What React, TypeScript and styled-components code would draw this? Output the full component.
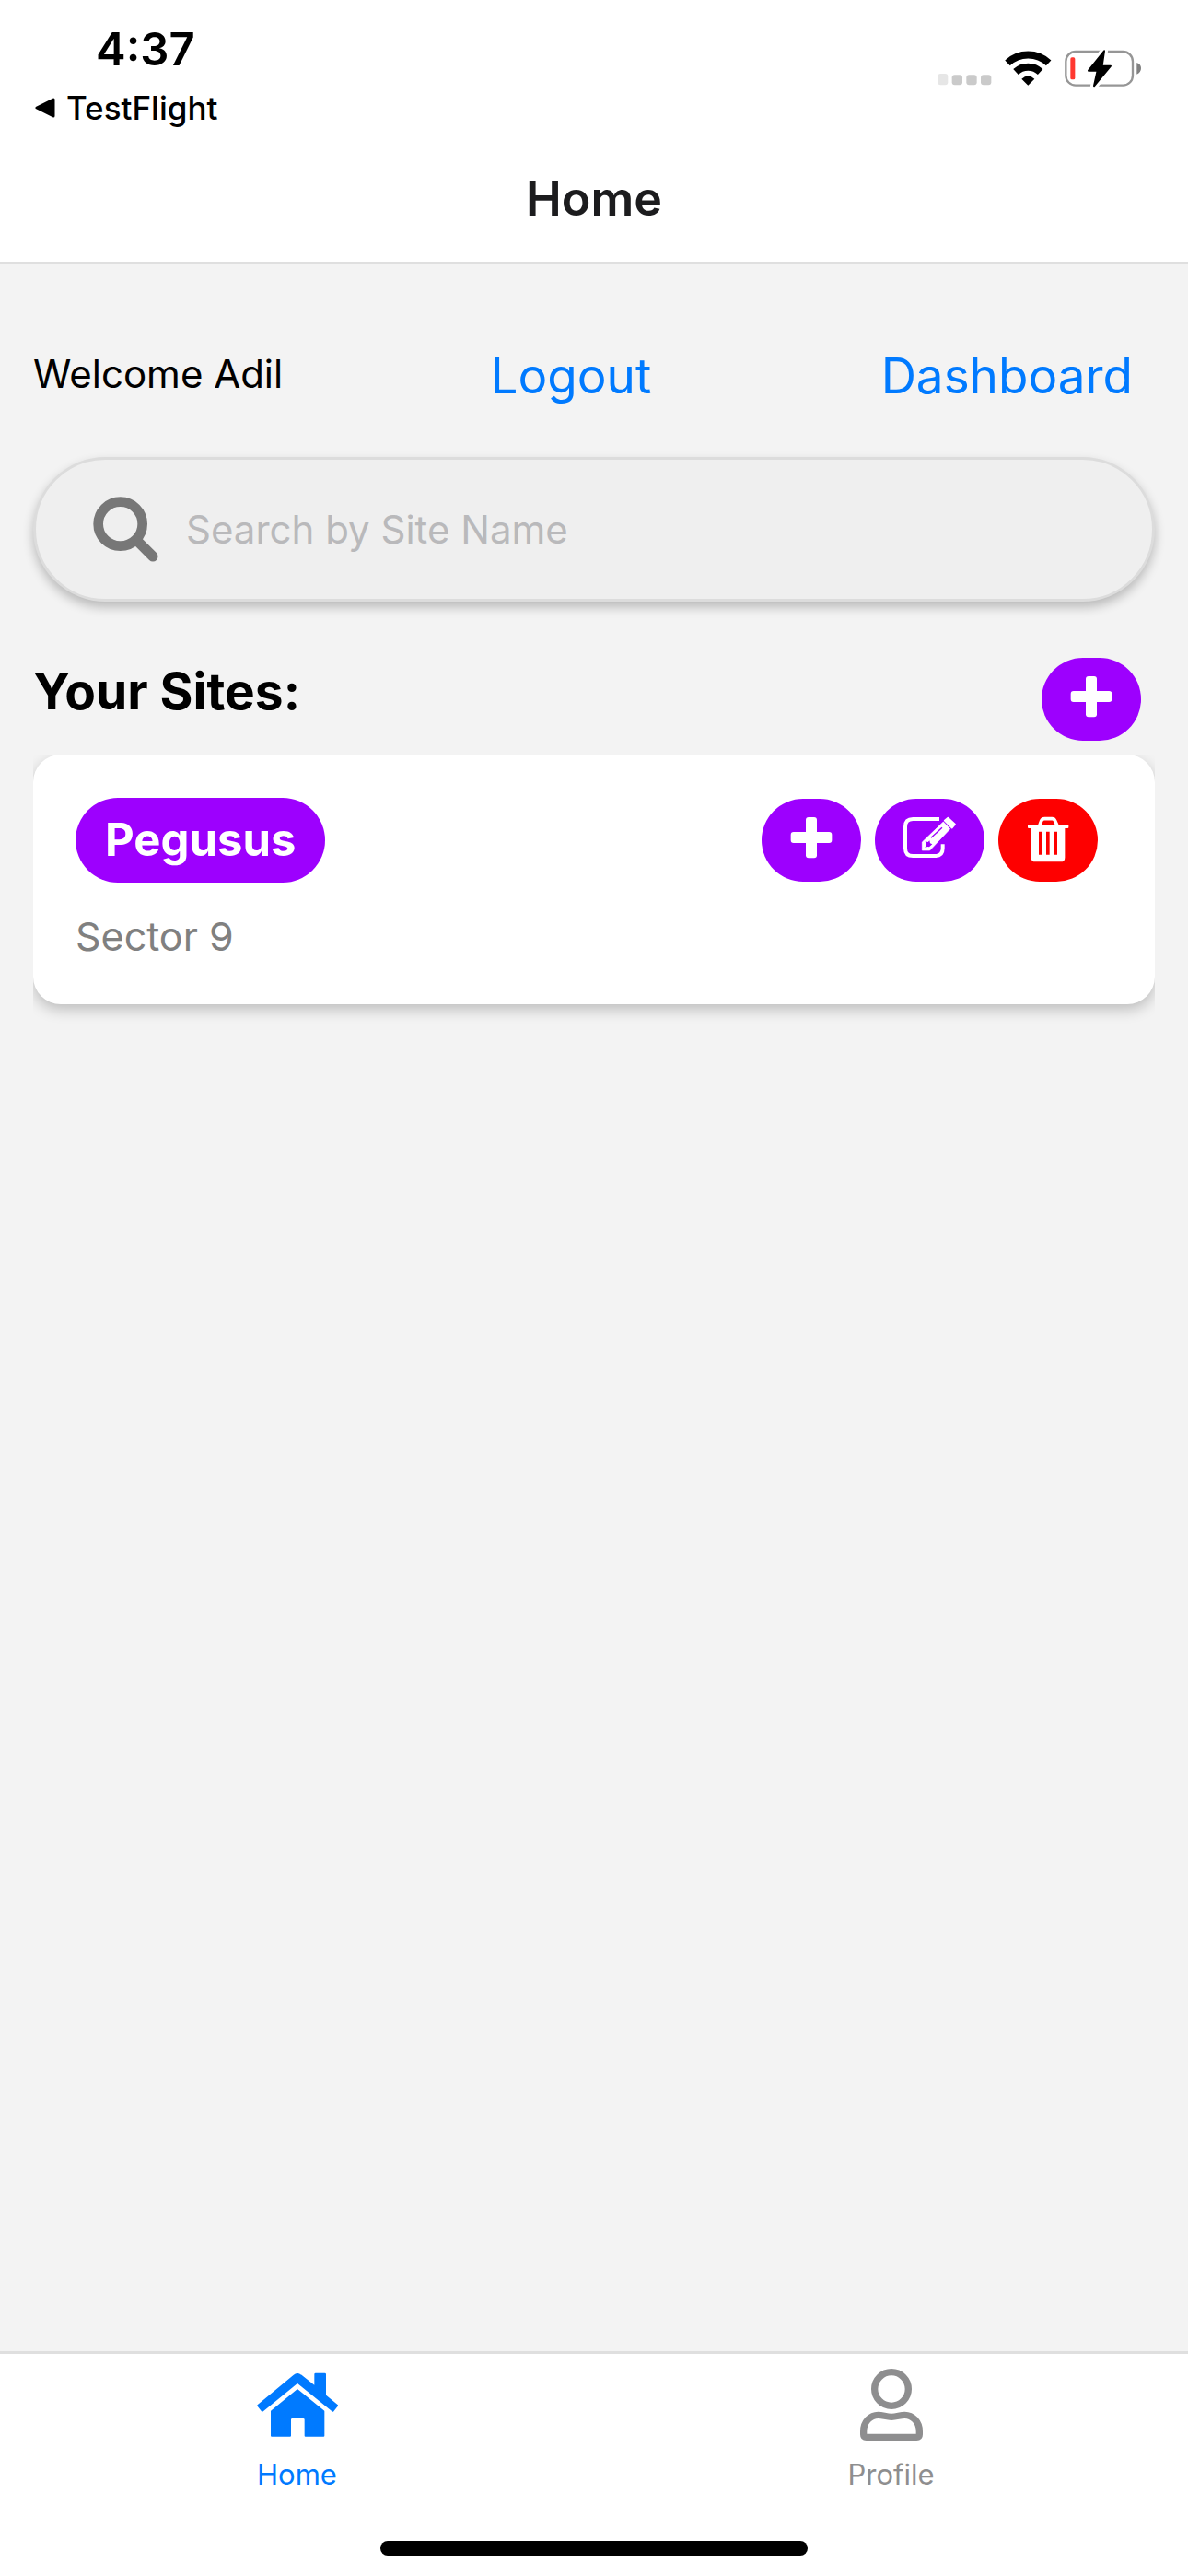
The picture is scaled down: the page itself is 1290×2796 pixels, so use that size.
import React, { useState } from "react";
import styled, { createGlobalStyle } from "styled-components";

const color = {
  purple: "#9d00fe",
  red: "#fe0000",
  blue: "#007aff",
  page: "#f3f3f3",
  grey: "#808080",
  tabGrey: "#8e8e8f",
  line: "#dfdfdf",
};

const GlobalStyle = createGlobalStyle`
  *, *::before, *::after { box-sizing: border-box; }
  body {
    margin: 0;
    background: ${color.page};
    color: #000;
    font-family: Inter, "Liberation Sans", sans-serif;
  }
  button, input { font-family: inherit; }
  h1, h2, p { margin: 0; }
  svg { display: block; flex: none; }
`;

const Screen = styled.div`
  display: flex;
  flex-direction: column;
  min-height: 100vh;
`;

const Header = styled.header`
  background: #fff;
  border-bottom: 3px solid ${color.line};
`;

const StatusBar = styled.div`
  display: flex;
  justify-content: space-between;
  align-items: flex-start;
  padding: 24px 50px 0 36px;
`;

const StatusLeft = styled.div`
  display: flex;
  flex-direction: column;
  gap: 12px;
`;

const Time = styled.time`
  padding-left: 68px;
  font-size: 49px;
  line-height: 60px;
  font-weight: 600;
`;

const BackLink = styled.a`
  display: flex;
  align-items: center;
  gap: 10px;
  color: #000;
  text-decoration: none;
  font-size: 35px;
  line-height: 42px;
  font-weight: 500;
`;

const StatusIcons = styled.div`
  display: flex;
  gap: 14px;
  padding-top: 29px;
`;

const Title = styled.h1`
  padding: 48px 36px 38px;
  text-align: center;
  font-size: 52px;
  line-height: 60px;
  font-weight: 600;
  color: #1c1c1e;
`;

const Content = styled.main`
  flex: 1;
  padding: 88px 36px 36px;
`;

const AccountRow = styled.div`
  display: flex;
  justify-content: space-between;
  align-items: flex-start;
`;

const Welcome = styled.p`
  font-size: 42px;
  line-height: 62px;
`;

const TextButton = styled.button`
  padding: 0 24px;
  border: 0;
  background: none;
  color: ${color.blue};
  font-size: 53px;
  line-height: 66px;
`;

const SearchBox = styled.label`
  display: flex;
  align-items: center;
  gap: 30px;
  height: 157px;
  margin-top: 55px;
  padding: 0 62px;
  border: 3px solid #dcdcdc;
  border-radius: 79px;
  background: #efefef;
  box-shadow: 0 6px 12px rgba(0, 0, 0, 0.24);
`;

const SearchInput = styled.input`
  flex: 1;
  min-width: 0;
  padding: 0;
  border: 0;
  outline: 0;
  background: none;
  font-size: 42px;
  line-height: 54px;
  &::placeholder {
    color: #b9b9bb;
    opacity: 1;
  }
`;

const SectionRow = styled.div`
  display: flex;
  justify-content: space-between;
  align-items: flex-start;
  margin-top: 61px;
  padding-right: 15px;
`;

const SectionTitle = styled.h2`
  font-size: 55px;
  line-height: 72px;
  font-weight: 700;
`;

const IconButton = styled.button<{ $danger?: boolean }>`
  display: flex;
  padding: 15px 30px;
  border: 0;
  border-radius: 45px;
  background: ${(p) => (p.$danger ? color.red : color.purple)};
  color: #fff;
`;

const SiteList = styled.div`
  overflow: hidden;
  margin-top: 15px;
  padding-bottom: 36px;
`;

const SiteCard = styled.article`
  padding: 47px 46px 44px;
  border-radius: 30px;
  background: #fff;
  box-shadow: 0 6px 15px rgba(0, 0, 0, 0.22);
`;

const SiteHead = styled.div`
  display: flex;
  justify-content: space-between;
  align-items: center;
`;

const SiteName = styled.button`
  padding: 15px 32px;
  border: 0;
  border-radius: 46px;
  background: ${color.purple};
  color: #fff;
  font-size: 49px;
  line-height: 62px;
  font-weight: 700;
`;

const SiteActions = styled.div`
  display: flex;
  gap: 15px;
  padding-right: 16px;
`;

const SiteAddress = styled.p`
  margin-top: 28px;
  font-size: 43px;
  line-height: 60px;
  color: ${color.grey};
`;

const Footer = styled.footer`
  display: flex;
  flex-direction: column;
  align-items: center;
  gap: 51px;
  padding-bottom: 22px;
  border-top: 3px solid ${color.line};
  background: #fff;
`;

const TabBar = styled.nav`
  display: flex;
  width: 100%;
  padding-top: 16px;
`;

const Tab = styled.a<{ $active?: boolean }>`
  display: flex;
  flex: 1;
  flex-direction: column;
  align-items: center;
  gap: 16px;
  color: ${(p) => (p.$active ? color.blue : color.tabGrey)};
  text-decoration: none;
  font-size: 31px;
  line-height: 42px;
`;

const HomeIndicator = styled.div`
  width: 36%;
  height: 16px;
  border-radius: 8px;
  background: #000;
`;

const BackArrow = () => (
  <svg width="26" height="22" viewBox="0 0 26 22" aria-hidden="true">
    <path
      d="M4 11 L22 2 V20 Z"
      fill="#000"
      stroke="#000"
      strokeWidth="3"
      strokeLinejoin="round"
    />
  </svg>
);

const SignalIcon = () => (
  <svg width="59" height="42" viewBox="175 160 177 126" aria-hidden="true">
    <rect x="176" y="241" width="33" height="37" rx="9" fill="#e6e6e6" />
    <rect x="222" y="245" width="34" height="33" rx="9" fill="#cacaca" />
    <rect x="269" y="245" width="34" height="33" rx="9" fill="#cacaca" />
    <rect x="316" y="245" width="34" height="33" rx="9" fill="#cacaca" />
  </svg>
);

const WifiIcon = () => (
  <svg width="51" height="42" viewBox="393 160 153 126" aria-hidden="true">
    <path
      d="M402 206 A98 98 0 0 1 536 206 M429 235 A58 58 0 0 1 509 235"
      fill="none"
      stroke="#000"
      strokeWidth="24"
    />
    <path d="M469 279 L448 258 Q469 239 490 258 Z" fill="#000" />
  </svg>
);

const BatteryIcon = () => (
  <svg width="84" height="42" viewBox="588 160 252 126" aria-hidden="true">
    <rect
      x="592"
      y="169"
      width="218"
      height="110"
      rx="32"
      fill="none"
      stroke="#969696"
      strokeWidth="7"
    />
    <path d="M823 205 Q837 210 837 223 Q837 237 823 243 Z" fill="#808080" />
    <rect x="607" y="188" width="15" height="72" rx="5" fill="#ff3830" />
    <path
      d="M717 167 L666 231 H695 L684 281 L738 216 H710 Z"
      fill="#000"
      stroke="#fff"
      strokeWidth="24"
      strokeLinejoin="round"
    />
    <path
      d="M717 167 L666 231 H695 L684 281 L738 216 H710 Z"
      fill="#000"
      stroke="#000"
      strokeWidth="6"
      strokeLinejoin="round"
    />
  </svg>
);

const SearchIcon = () => (
  <svg width="71" height="71" viewBox="302 543 213 213" aria-hidden="true">
    <g fill="none" stroke="#777" strokeLinecap="round">
      <circle cx="391" cy="632" r="72" strokeWidth="32" />
      <path d="M450 691 L497 738" strokeWidth="33" />
    </g>
  </svg>
);

const PlusIcon = () => (
  <svg width="48" height="60" viewBox="167 579 144 180" aria-hidden="true">
    <rect x="221" y="594" width="36" height="133" rx="9" fill="currentColor" />
    <rect x="172" y="642" width="134" height="36" rx="9" fill="currentColor" />
  </svg>
);

const EditIcon = () => (
  <svg width="59" height="60" viewBox="540 579 177 180" aria-hidden="true">
    <path
      d="M660 600 H574 Q549 600 549 625 V695 Q549 720 574 720 H646 Q671 720 671 695 V682"
      fill="none"
      stroke="currentColor"
      strokeWidth="12"
    />
    <path
      d="M604 702 V675 L673 609 L695 632 L629 702 Z"
      fill="currentColor"
      stroke="currentColor"
      strokeWidth="2"
      strokeLinejoin="round"
    />
    <path
      d="M677 605 L688 596 L711 617 L701 629 Z"
      fill="currentColor"
      stroke="currentColor"
      strokeWidth="5"
      strokeLinejoin="round"
    />
    <path d="M633 661 L669 628" stroke={color.purple} strokeWidth="4" />
    <path
      d="M614 673 L623 675 L628 670 L630 679 L637 682 L627 691 L622 690 L613 692 L618 684 Z"
      fill={color.purple}
    />
  </svg>
);

const TrashIcon = () => (
  <svg width="48" height="60" viewBox="941 579 144 180" aria-hidden="true">
    <path
      d="M985 622 L991 606 Q994 599 1002 599 H1026 Q1033 599 1036 606 L1043 622"
      fill="none"
      stroke="currentColor"
      strokeWidth="11"
    />
    <rect x="947" y="618" width="133" height="12" rx="3" fill="currentColor" />
    <path
      fill="currentColor"
      fillRule="evenodd"
      d="M958 626 H1068 V725 Q1068 739 1054 739 H972 Q958 739 958 725 Z M983 641 V716 H994 V641 Z M1007 641 V716 H1018 V641 Z M1031 641 V716 H1043 V641 Z"
    />
  </svg>
);

const HomeIcon = () => (
  <svg width="88" height="78" viewBox="228 122 264 234" aria-hidden="true">
    <g fill="currentColor" stroke="currentColor" strokeLinejoin="round">
      <path
        strokeWidth="8"
        d="M360 141 Q356 140 350 145 L233 242 L246 258 L360 165 L475 258 L488 242 L449 210 V140 H419 V184 L370 145 Q364 140 360 141 Z"
      />
      <path
        strokeWidth="6"
        d="M276 261 L360 192 L445 261 V340 H386 V288 Q386 281 379 281 H343 Q336 281 336 288 V340 H276 Z"
      />
    </g>
  </svg>
);

const ProfileIcon = () => (
  <svg width="68" height="78" viewBox="249 122 204 234" aria-hidden="true">
    <g fill="none" stroke="currentColor" strokeWidth="22" strokeLinejoin="round">
      <circle cx="351" cy="188" r="55" />
      <path d="M260 336 V326 C260 295 282 273 308 273 C323 273 334 279 351 279 C368 279 379 273 394 273 C420 273 442 295 442 326 V336 Q442 345 433 345 H269 Q260 345 260 336 Z" />
    </g>
  </svg>
);

const sites = [{ name: "Pegusus", address: "Sector 9" }];

export default function App() {
  const [query, setQuery] = useState("");
  const visible = sites.filter((site) =>
    site.name.toLowerCase().includes(query.toLowerCase())
  );

  return (
    <Screen>
      <GlobalStyle />
      <Header>
        <StatusBar>
          <StatusLeft>
            <Time>4:37</Time>
            <BackLink href="#testflight">
              <BackArrow />
              TestFlight
            </BackLink>
          </StatusLeft>
          <StatusIcons>
            <SignalIcon />
            <WifiIcon />
            <BatteryIcon />
          </StatusIcons>
        </StatusBar>
        <Title>Home</Title>
      </Header>

      <Content>
        <AccountRow>
          <Welcome>Welcome Adil</Welcome>
          <TextButton type="button">Logout</TextButton>
          <TextButton type="button">Dashboard</TextButton>
        </AccountRow>

        <SearchBox>
          <SearchIcon />
          <SearchInput
            type="text"
            aria-label="Search by Site Name"
            placeholder="Search by Site Name"
            value={query}
            onChange={(e) => setQuery(e.target.value)}
          />
        </SearchBox>

        <SectionRow>
          <SectionTitle>Your Sites:</SectionTitle>
          <IconButton type="button" aria-label="Add site">
            <PlusIcon />
          </IconButton>
        </SectionRow>

        <SiteList>
          {visible.map((site) => (
            <SiteCard key={site.name}>
              <SiteHead>
                <SiteName type="button">{site.name}</SiteName>
                <SiteActions>
                  <IconButton type="button" aria-label="Add to site">
                    <PlusIcon />
                  </IconButton>
                  <IconButton type="button" aria-label="Edit site">
                    <EditIcon />
                  </IconButton>
                  <IconButton type="button" aria-label="Delete site" $danger>
                    <TrashIcon />
                  </IconButton>
                </SiteActions>
              </SiteHead>
              <SiteAddress>{site.address}</SiteAddress>
            </SiteCard>
          ))}
        </SiteList>
      </Content>

      <Footer>
        <TabBar>
          <Tab href="#home" $active aria-current="page">
            <HomeIcon />
            Home
          </Tab>
          <Tab href="#profile">
            <ProfileIcon />
            Profile
          </Tab>
        </TabBar>
        <HomeIndicator />
      </Footer>
    </Screen>
  );
}
